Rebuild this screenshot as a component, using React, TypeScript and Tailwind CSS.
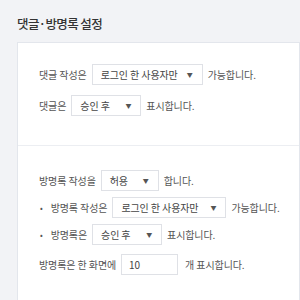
const Caret = () => (
  <span className="ml-auto text-[6px] leading-none text-[#555]">▼</span>
)

function Select({ label, className }: { label: string; className: string }) {
  return (
    <div
      className={`mx-[5px] flex h-[21px] items-center border border-[#dfe1e6] bg-white pl-[8px] pr-[9px] whitespace-nowrap text-[#444] ${className}`}
    >
      <span>{label}</span>
      <Caret />
    </div>
  )
}

function Row({ children, bullet }: { children: React.ReactNode; bullet?: boolean }) {
  return (
    <div className="flex h-[21px] items-center whitespace-nowrap">
      {bullet && <span className="mr-[8px] ml-[1px] text-[8px] text-[#555]">•</span>}
      {children}
    </div>
  )
}

export default function App() {
  return (
    <div
      className="h-[300px] w-[300px] overflow-hidden bg-[#f2f3f6] text-[10px] tracking-[-0.1px] text-[#555]"
      style={{ fontFamily: '"Noto Sans CJK KR", "Noto Sans", sans-serif' }}
    >
      <h2 className="px-[17px] pt-[14px] pb-[8px] text-[12.5px] leading-[20px] font-medium tracking-[-0.6px] text-[#333]">
        댓글·방명록 설정
      </h2>
      <div className="ml-[17px] h-[400px] border border-[#e3e6ec] bg-white">
        <div className="flex flex-col gap-[10px] border-b border-[#eceef2] pt-[21px] pb-[29px] pl-[21px]">
          <Row>
            댓글 작성은
            <Select label="로그인 한 사용자만" className="w-[111px]" />
            가능합니다.
          </Row>
          <Row>
            댓글은
            <Select label="승인 후" className="w-[70px]" />
            표시합니다.
          </Row>
        </div>
        <div className="flex flex-col gap-[6px] pt-[24px] pl-[21px]">
          <Row>
            방명록 작성을
            <Select label="허용" className="w-[58px]" />
            합니다.
          </Row>
          <Row bullet>
            방명록 작성은
            <Select label="로그인 한 사용자만" className="w-[114px]" />
            가능합니다.
          </Row>
          <Row bullet>
            방명록은
            <Select label="승인 후" className="w-[70px]" />
            표시합니다.
          </Row>
          <div className="mt-[3px] flex h-[21px] items-center whitespace-nowrap">
            방명록은 한 화면에
            <div className="mx-[5px] flex h-[21px] w-[57px] items-center border border-[#dfe1e6] pl-[7px] text-[#444]">
              10
            </div>
            <span className="ml-[2px] text-[#555]">개 표시합니다.</span>
          </div>
        </div>
      </div>
    </div>
  )
}
